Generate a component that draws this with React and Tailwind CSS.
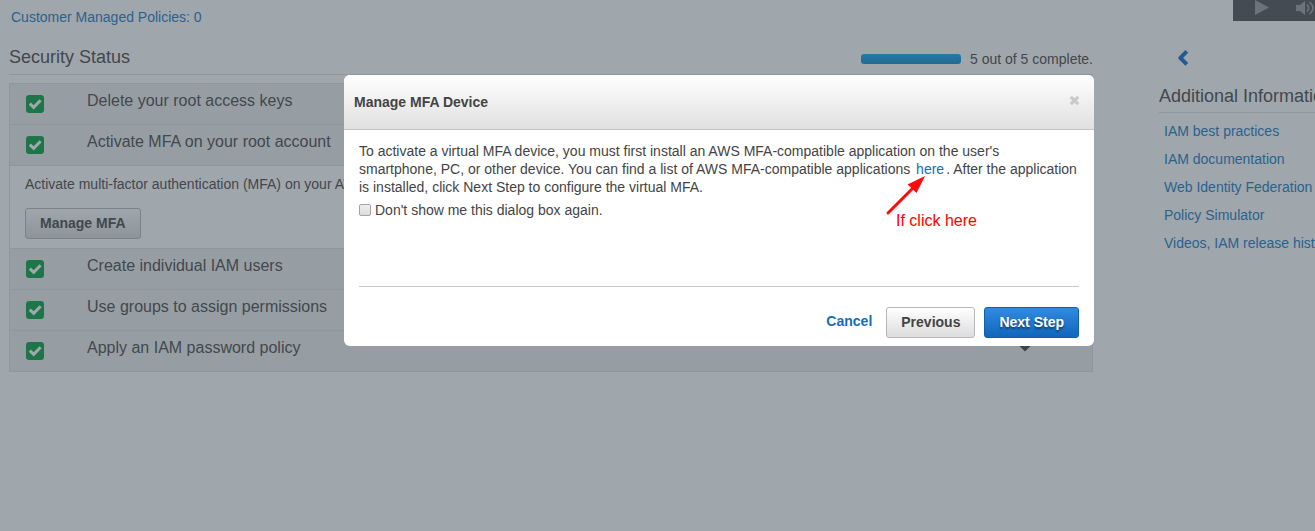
import React from "react";

function CheckBadge() {
  return (
    <svg className="size-[18px] shrink-0" viewBox="0 0 18 18" aria-hidden="true">
      <rect width="18" height="18" rx="3.2" fill="#1e7547" />
      <path d="M3.800 8.600L7.700 12.400L14.600 5.300" fill="none" stroke="#a0a8ad" strokeWidth="3" />
    </svg>
  );
}

function Chevron() {
  return (
    <svg className="mb-2 h-3 w-4" viewBox="0 0 16 12" aria-hidden="true">
      <path d="M4 3l5 5 5-5" fill="none" stroke="#3b4248" strokeWidth="3.600" />
    </svg>
  );
}

function StatusRow({ label }) {
  return (
    <button
      type="button"
      className="flex h-[41px] w-full items-center border-t border-[#8f969c] bg-[#979ea3] pr-[60px] pl-4 text-left"
    >
      <span className="mr-[43px] flex">
        <CheckBadge />
      </span>
      <span className="flex-1 pb-[6px] text-base leading-5">{label}</span>
      <Chevron />
    </button>
  );
}

const resources = [
  "IAM best practices",
  "IAM documentation",
  "Web Identity Federation Playground",
  "Policy Simulator",
  "Videos, IAM release history and additional resources",
];

function Sidebar() {
  return (
    <aside className="w-[156px] shrink-0 overflow-hidden whitespace-nowrap">
      <div className="ml-auto flex h-[21px] w-[82px] items-start bg-[#444b52]">
        <button type="button" aria-label="Play" className="ml-[22px]">
          <svg className="block h-4 w-[14px]" viewBox="0 0 14 16">
            <path d="M0 0v15L14 7.500 0 0z" fill="#6c747b" />
          </svg>
        </button>
        <button type="button" aria-label="Volume" className="ml-[27px]">
          <svg className="block h-4 w-[19px]" viewBox="0 0 19 16">
            <path d="M0 5h4L9 1v14l-5-4H0z" fill="#6c747b" />
            <path d="M11 4.500q3.500 3.500 0 7M13.500 2q7 6 0 12" fill="none" stroke="#6c747b" strokeWidth="1.600" />
          </svg>
        </button>
      </div>
      <button type="button" aria-label="Collapse panel" className="mt-[29px] ml-[18px] block">
        <svg className="block h-4 w-3" viewBox="0 0 12 16">
          <path d="M9.800 1.400L3.400 7.900l6.400 6.500" fill="none" stroke="#235a95" strokeWidth="4" strokeLinejoin="round" />
        </svg>
      </button>
      <h2 className="mt-[18px] border-b border-[#8f969c] pb-1 text-lg leading-6">Additional Information</h2>
      <ul className="mt-1 pl-[5px]">
        {resources.map((item) => (
          <li key={item} className="h-7 leading-7">
            <a href="#" className="text-[#2a628f]">{item}</a>
          </li>
        ))}
      </ul>
    </aside>
  );
}

function Dialog() {
  return (
    <div
      role="dialog"
      aria-labelledby="dialog-title"
      className="absolute top-[75px] left-[344px] w-[750px] overflow-hidden rounded-md bg-white text-[#444]"
    >
      <header className="flex h-[55px] items-center justify-between border-b border-[#c4c4c4] bg-linear-to-b from-white to-[#e0e0e0] pr-[14px] pl-[10px]">
        <h2 id="dialog-title" className="font-bold">Manage MFA Device</h2>
        <button type="button" aria-label="Close" className="pb-[3px]">
          <svg className="block size-[11px]" viewBox="0 0 11 11">
            <path d="M1.800 1.800l7.400 7.400M9.200 1.800l-7.400 7.400" stroke="#c9c9c9" strokeWidth="3.200" />
          </svg>
        </button>
      </header>
      <div className="px-[15px] pt-3 pb-2">
        <p className="leading-[18px]">
          To activate a virtual MFA device, you must first install an AWS MFA-compatible application on the user's
          smartphone, PC, or other device. You can find a list of AWS MFA-compatible applications{" "}
          <a href="#" className="mx-[2px] text-[#146eb4]">here</a>. After the application is installed, click Next Step to
          configure the virtual MFA.
        </p>
        <label className="mt-[5px] flex items-center gap-1 leading-[18px]">
          <input
            type="checkbox"
            className="size-3 appearance-none rounded-[2px] border border-[#a3a3a3] bg-linear-to-b from-[#efefef] to-[#dcdcdc] checked:bg-[#146eb4]"
          />
          Don't show me this dialog box again.
        </label>
        <footer className="mt-[67px] flex items-center justify-end border-t border-[#c8c8c8] pt-5 font-bold">
          <button type="button" className="mr-[14px] pb-1 text-[#146eb4]">Cancel</button>
          <button
            type="button"
            className="mr-[9px] h-[31px] rounded-[3px] border border-[#b8b8b8] bg-linear-to-b from-white to-[#dcdcdc] px-[14px] pb-[2px]"
          >
            Previous
          </button>
          <button
            type="button"
            className="h-[31px] rounded-[3px] border border-[#1160ae] bg-linear-to-b from-[#308be0] to-[#1166bb] px-[14px] pb-[2px] text-white [text-shadow:0_2px_2px_#0d3c6e]"
          >
            Next Step
          </button>
        </footer>
      </div>
      <div className="pointer-events-none absolute top-[100px] left-[540px] flex text-base leading-5 text-[#ff0000]">
        <svg className="h-[42px] w-[42px]" viewBox="0 0 42 42" aria-hidden="true">
          <path d="M4 38L29 13" stroke="#ff0a0a" strokeWidth="3" strokeLinecap="round" />
          <path d="M41 1L23.500 9.500l4.500 4 4.500 4.500z" fill="#ff0a0a" />
        </svg>
        <span className="-ml-[30px] pt-[36px]">If click here</span>
      </div>
    </div>
  );
}

export default function App() {
  return (
    <div className="relative min-h-screen overflow-hidden bg-[#9fa6ac] font-['Liberation_Sans',Arial,sans-serif] text-sm leading-5 text-[#42484d]">
      <div className="flex">
        <main className="mr-[66px] ml-[9px] min-w-0 flex-1 pt-[7px]">
          <a href="#" className="ml-[2px] block text-[#2a628f]">Customer Managed Policies: 0</a>
          <div className="mt-[18px] flex items-center justify-between border-b border-[#8f969c] pb-[5px]">
            <h1 className="text-lg leading-6">Security Status</h1>
            <div className="flex items-center gap-[9px] pt-1">
              <div className="h-[10px] w-[100px] rounded-[3px] bg-linear-to-b from-[#2778a5] to-[#226a96]" />
              <span>5 out of 5 complete.</span>
            </div>
          </div>
          <section className="mt-2 border border-t-0 border-[#8f969c]">
            <StatusRow label="Delete your root access keys" />
            <StatusRow label="Activate MFA on your root account" />
            <div className="border-t border-[#8f969c] px-[15px] pt-2 pb-[9px]">
              <p>Activate multi-factor authentication (MFA) on your AWS root account to add another layer of protection.</p>
              <button
                type="button"
                className="mt-[14px] h-[31px] rounded-[3px] border border-[#7b8288] bg-linear-to-b from-[#9fa6ac] to-[#8d949a] px-[14px] pb-[2px] font-bold"
              >
                Manage MFA
              </button>
            </div>
            <StatusRow label="Create individual IAM users" />
            <StatusRow label="Use groups to assign permissions" />
            <StatusRow label="Apply an IAM password policy" />
          </section>
        </main>
        <Sidebar />
      </div>
      <Dialog />
    </div>
  );
}
